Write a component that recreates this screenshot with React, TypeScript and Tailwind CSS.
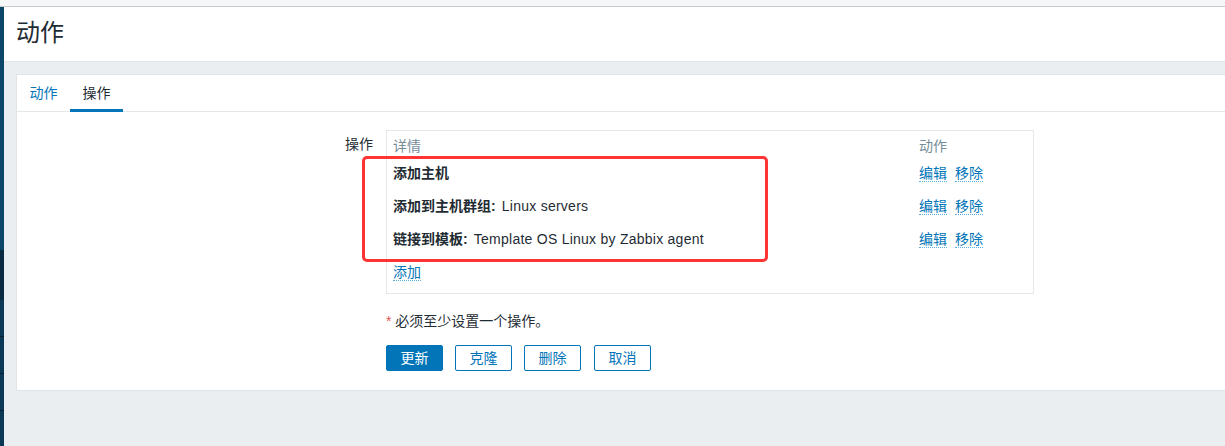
import React from 'react';

interface Operation {
    label: string;
    value?: string;
}

const operations: Operation[] = [
    { label: '添加主机' },
    { label: '添加到主机群组:', value: 'Linux servers' },
    { label: '链接到模板:', value: 'Template OS Linux by Zabbix agent' },
];

const font = "font-['Liberation_Sans','Noto_Sans_CJK_SC',sans-serif]";

const LinkText: React.FC<{ children: React.ReactNode }> = ({ children }) => (
    <span className="text-[#0275b8] leading-[16px] border-b border-dotted border-[#5aaee0] cursor-pointer">
        {children}
    </span>
);

const App: React.FC = () => {
    return (
        <div className={`${font} w-[1225px] h-[446px] overflow-hidden bg-[#ebeef0] text-[14px] text-[#1f2c33]`}>
            {/* top strip */}
            <div className="h-[7px] bg-[#f6f7f8] border-b border-[#c8c8c8]" />

            <div className="flex h-[439px]">
                {/* sidebar edge */}
                <div className="w-[4px] flex flex-col">
                    <div className="h-[243px] bg-[#0b4668]" />
                    <div className="h-[50px] bg-[#0a2a42]" />
                    <div className="h-[37px] bg-[#0c3858] border-b border-[#081e30]" />
                    <div className="h-[37px] bg-[#0c3858] border-b border-[#081e30]" />
                    <div className="h-[37px] bg-[#0c3858] border-b border-[#081e30]" />
                    <div className="flex-1 bg-[#0c3858]" />
                </div>

                <div className="flex-1 flex flex-col">
                    {/* header */}
                    <div className="h-[55px] bg-white border-b border-[#dfe4e7] flex items-center pl-[12px]">
                        <h1 className="text-[24px] leading-none text-[#1f2c33] -mt-[2px]">动作</h1>
                    </div>

                    {/* card */}
                    <div className="relative mt-[12px] ml-[12px] bg-white border-l border-t border-b border-[#dfe4e7]">
                        {/* tabs */}
                        <div className="flex h-[37px] border-b border-[#e3e7ea]">
                            <div className="w-[53px] flex items-center justify-center text-[#0275b8] cursor-pointer">
                                动作
                            </div>
                            <div className="w-[53px] flex items-center justify-center border-b-[3px] border-[#0275b8] pt-[3px] -mb-[1px]">
                                操作
                            </div>
                        </div>

                        <div className="pt-[18px] pb-[19px]">
                            <div className="flex">
                                <div className="w-[356px] text-right pt-[5px] leading-[18px]">操作</div>
                                <div className="ml-[13px] w-[648px] border border-[#e6e9eb]">
                                    <div className="h-[26px] pt-[6px] flex leading-[18px] text-[#768d99]">
                                        <div className="w-[532px] pl-[6px]">详情</div>
                                        <div>动作</div>
                                    </div>
                                    {operations.map((op) => (
                                        <div key={op.label} className="h-[33px] flex items-center">
                                            <div className="w-[532px] pl-[6px]">
                                                <span className="font-bold">{op.label}</span>
                                                {op.value && (
                                                    <span className="ml-[2px] tracking-[0.25px]"> {op.value}</span>
                                                )}
                                            </div>
                                            <div className="flex gap-[8px]">
                                                <LinkText>编辑</LinkText>
                                                <LinkText>移除</LinkText>
                                            </div>
                                        </div>
                                    ))}
                                    <div className="h-[33px] flex items-center pl-[6px]">
                                        <LinkText>添加</LinkText>
                                    </div>
                                    <div className="h-[4px]" />
                                </div>
                            </div>

                            <div className="ml-[369px] mt-[18px] leading-[18px]">
                                <span className="text-[#e45959]">*</span> 必须至少设置一个操作。
                            </div>

                            <div className="ml-[369px] mt-[15px] flex gap-[12px]">
                                <button className="w-[57px] h-[26px] rounded-[2px] bg-[#0275b8] border border-[#0275b8] text-white">
                                    更新
                                </button>
                                <button className="w-[57px] h-[26px] rounded-[2px] bg-white border border-[#0275b8] text-[#0275b8]">
                                    克隆
                                </button>
                                <button className="w-[57px] h-[26px] rounded-[2px] bg-white border border-[#0275b8] text-[#0275b8]">
                                    删除
                                </button>
                                <button className="w-[57px] h-[26px] rounded-[2px] bg-white border border-[#0275b8] text-[#0275b8] ml-[1px]">
                                    取消
                                </button>
                            </div>
                        </div>

                        {/* red annotation box */}
                        <div className="absolute left-[345px] top-[81px] w-[406px] h-[106px] border-[3px] border-[#ff3434] rounded-[5px] pointer-events-none" />
                    </div>
                </div>
            </div>
        </div>
    );
};

export default App;
